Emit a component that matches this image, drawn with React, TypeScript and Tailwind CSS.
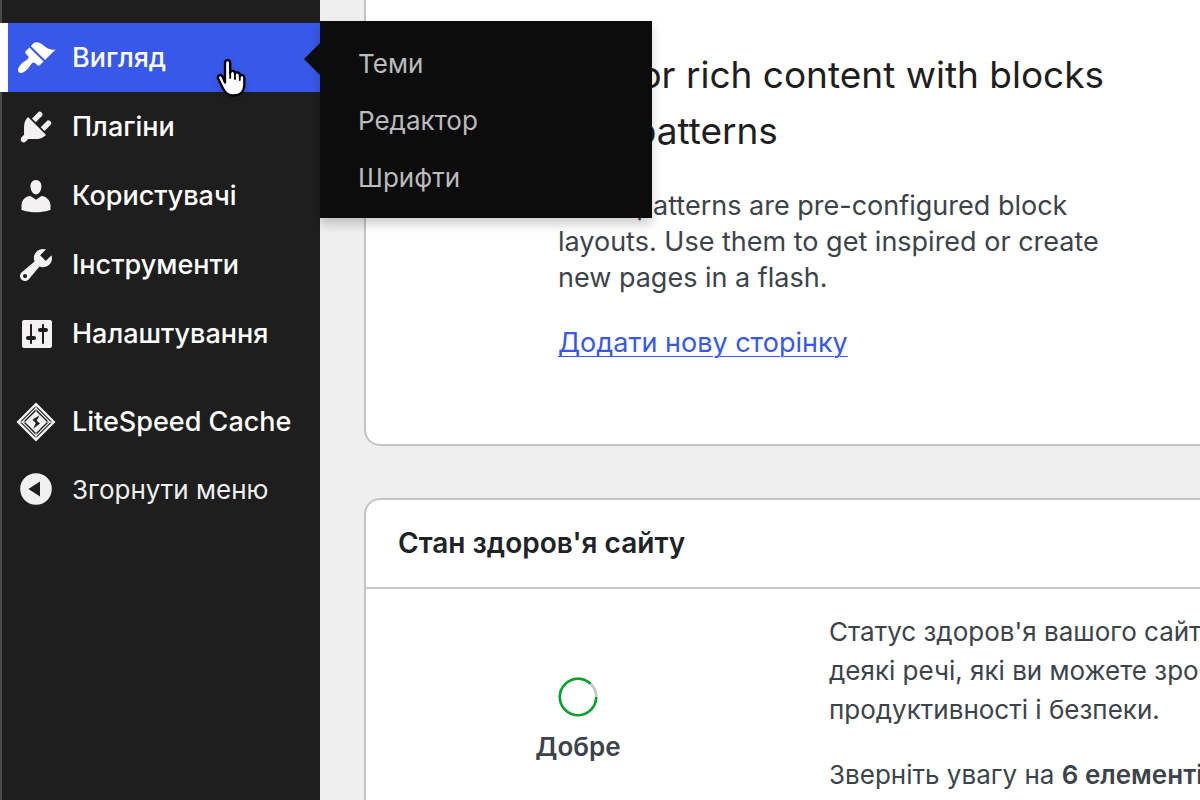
import type { ReactNode } from "react";

type MenuItem = {
  label: string;
  path: string;
};

const items: MenuItem[] = [
  {
    label: "Плагіни",
    path: "M13.11 4.36L9.87 7.6 8 5.73l3.24-3.24c.35-.34 1.05-.2 1.56.32.52.51.66 1.21.31 1.55zm-8 1.77l.91-1.12 9.01 9.01-1.19.84c-.71.71-2.63 1.16-3.82 1.16H6.14L4.9 17.26c-.59.59-1.54.59-2.12 0-.59-.58-.59-1.53 0-2.12l1.24-1.24v-3.88c0-1.13.4-3.19 1.09-3.89zm7.26 3.97l3.24-3.24c.34-.35 1.04-.21 1.55.31.52.51.66 1.21.31 1.55l-3.24 3.25z",
  },
  {
    label: "Користувачі",
    path: "M10 9.25c-2.27 0-2.73-3.44-2.73-3.44C7 4.02 7.82 2 9.97 2c2.16 0 2.98 2.02 2.71 3.81 0 0-.41 3.44-2.68 3.44zm0 2.57L12.72 10c2.39 0 4.52 2.33 4.52 4.53v2.49s-3.65 1.13-7.24 1.13c-3.65 0-7.24-1.13-7.24-1.13v-2.49c0-2.25 1.94-4.48 4.47-4.48z",
  },
  {
    label: "Інструменти",
    path: "M16.68 9.77c-1.34 1.34-3.3 1.67-4.95.99l-5.41 6.52c-.99.99-2.59.99-3.58 0s-.99-2.59 0-3.57l6.52-5.42c-.68-1.65-.35-3.61.99-4.95 1.28-1.28 3.12-1.62 4.72-1.06l-2.89 2.89 2.82 2.82 2.86-2.87c.53 1.58.18 3.39-1.08 4.65zM3.81 16.21c.4.39 1.04.39 1.43 0 .4-.4.4-1.04 0-1.43-.39-.4-1.03-.4-1.43 0-.39.39-.39 1.03 0 1.43z",
  },
  {
    label: "Налаштування",
    path: "M18 16V4c0-.55-.45-1-1-1H4c-.55 0-1 .45-1 1v12c0 .55.45 1 1 1h13c.55 0 1-.45 1-1zM8 11h1c.55 0 1 .45 1 1s-.45 1-1 1H8v1.5c0 .28-.22.5-.5.5s-.5-.22-.5-.5V13H6c-.55 0-1-.45-1-1s.45-1 1-1h1V5.5c0-.28.22-.5.5-.5s.5.22.5.5V11zm5-2h-1c-.55 0-1-.45-1-1s.45-1 1-1h1V5.5c0-.28.22-.5.5-.5s.5.22.5.5V7h1c.55 0 1 .45 1 1s-.45 1-1 1h-1v5.5c0 .28-.22.5-.5.5s-.5-.22-.5-.5V9z",
  },
];

const submenu = ["Теми", "Редактор", "Шрифти"];

function Icon({ children }: { children: ReactNode }) {
  return (
    <svg viewBox="0 0 20 20" className="size-10 shrink-0" fill="currentColor" aria-hidden="true">
      {children}
    </svg>
  );
}

function HandCursor() {
  return (
    <svg
      viewBox="0 0 32 42"
      className="absolute left-[215px] top-[35px] w-8 h-[42px] drop-shadow-md"
      aria-hidden="true"
    >
      <path
        d="M10 24.500V5.200C10 1.200 15.200 1.200 15.200 5.200V15C15.500 12 20 12.300 20 15.500V16C20.500 13.600 24.800 14 24.800 17.200V18.200C25.500 16.300 29.300 16.800 29.300 20V26.500C29.300 33 25.500 37.500 18.500 37.500C13.500 37.500 10.600 35.500 8.300 31L3.200 20.800C1.800 17.600 5.600 15.600 7.500 18.500Z"
        fill="#fff"
        stroke="#000"
        strokeWidth="2.300"
        strokeLinejoin="round"
      />
      <path d="M15.200 14V20M20 15.500V21M24.800 17.500V22" stroke="#000" strokeWidth="1.800" strokeLinecap="round" />
    </svg>
  );
}

function Sidebar() {
  return (
    <nav className="relative z-10 w-80 shrink-0 bg-[#1e1e1e] text-white text-[27px] font-medium leading-[37px]">
      <div className="absolute inset-y-0 left-0 w-[2px] bg-[#4a4a4a]" />
      <ul className="pt-[23px]">
        <li className="relative">
          <a
            href="#appearance"
            className="flex min-h-[69px] items-center gap-4 border-l-8 border-white bg-[#3858e9] pl-2"
          >
            <Icon>
              <path d="M14.480 11.060L7.410 3.990l1.500-1.500c.5-.56 2.300-.47 3.510.32 1.210.8 1.430 1.280 2.910 2.100 1.180.64 2.450 1.260 4.450.85zm-.71.71L6.700 4.700 4.930 6.470c-.39.39-.39 1.020 0 1.410l1.060 1.060c.39.39.39 1.030 0 1.420-.6.6-1.430 1.110-2.210 1.690-.35.26-.7.53-1.010.84C1.430 14.230.4 16.080 1.400 17.070c.99 1 2.840-.03 4.180-1.360.31-.31.58-.66.85-1.020.57-.78 1.080-1.610 1.690-2.210.39-.39 1.020-.39 1.410 0l1.060 1.060c.39.39 1.020.39 1.410 0z" />
            </Icon>
            Вигляд
          </a>
          <div className="absolute left-full -top-[2px] w-[332px] bg-[#0c0c0c] pt-[14px] pb-3 text-[26px] font-normal text-[#bbbbbc] shadow-[0_6px_10px_rgba(0,0,0,0.2)]">
            <div className="absolute right-full top-[22px] border-y-[16px] border-r-[16px] border-y-transparent border-r-[#0c0c0c]" />
            <ul>
              {submenu.map((label) => (
                <li key={label}>
                  <a href="#submenu" className="block px-[38px] py-[10px] leading-[37px]">
                    {label}
                  </a>
                </li>
              ))}
            </ul>
          </div>
          <HandCursor />
        </li>

        {items.map((item) => (
          <li key={item.label}>
            <a href="#menu" className="flex min-h-[69px] items-center gap-4 px-4">
              <span className="text-[#f3f1f1]">
                <Icon>
                  <path d={item.path} />
                </Icon>
              </span>
              {item.label}
            </a>
          </li>
        ))}

        <li className="mt-[19px]">
          <a href="#litespeed" className="flex min-h-[69px] items-center gap-4 px-4">
            <span className="text-[#f3f1f1]">
              <Icon>
                <path
                  d="M10 1.100L18.900 10 10 18.900 1.100 10z"
                  fill="none"
                  stroke="currentColor"
                  strokeWidth="1.200"
                />
                <path
                  d="M10 3.100L16.900 10 10 16.900 3.100 10z"
                  fill="none"
                  stroke="currentColor"
                  strokeWidth=".6"
                />
                <path d="M10 1v3.500M10 15.500V19M1 10h3.500M15.500 10H19" stroke="currentColor" strokeWidth=".5" />
                <path d="M10 4.500L15.500 10 10 15.500 4.500 10z" />
                <path d="M11.800 6.600L8.200 8.900l1.700 1.600-1.300 2.900 3.400-2.600-1.700-1.600z" fill="#1e1e1e" />
              </Icon>
            </span>
            LiteSpeed Cache
          </a>
        </li>
        <li>
          <button
            type="button"
            className="flex min-h-[66px] w-full items-center gap-4 px-4 text-[26px] font-normal text-[#f0f0f0]"
          >
            <Icon>
              <path fillRule="evenodd" d="M10 2.100a7.900 7.900 0 1 0 0 15.800 7.900 7.900 0 0 0 0-15.800zM12 6.200v7.600L6.200 10z" />
            </Icon>
            Згорнути меню
          </button>
        </li>
      </ul>
    </nav>
  );
}

function WelcomePanel() {
  return (
    <section className="rounded-bl-2xl border-2 border-t-0 border-r-0 border-[#c3c4c7] bg-white pl-48 pt-[47px] pb-[83px]">
      <div className="max-w-[560px]">
        <h3 className="text-[37px] leading-[56px] text-[#1e1e1e]">
          Author rich content with blocks and patterns
        </h3>
        <p className="mt-[29px] text-[27px] leading-9 text-[#3c434a]">
          Block patterns are pre-configured block layouts. Use them to get inspired or create new
          pages in a flash.
        </p>
        <a
          href="#new-page"
          className="mt-[29px] inline-block text-[27px] leading-9 text-[#3858e9] underline decoration-1 underline-offset-4"
        >
          Додати нову сторінку
        </a>
      </div>
    </section>
  );
}

function SiteHealth() {
  return (
    <section className="mt-13 grow rounded-tl-2xl border-2 border-r-0 border-b-0 border-[#c3c4c7] bg-white">
      <h2 className="border-b-2 border-[#c3c4c7] px-8 py-6 text-[28px] leading-[39px] font-semibold text-[#1d2327]">
        Стан здоров'я сайту
      </h2>
      <div className="flex gap-[71px] pl-8 text-[26px] leading-[39px] text-[#3c434a]">
        <div className="flex w-[360px] shrink-0 flex-col items-center pt-[88px]">
          <svg viewBox="0 0 40 40" className="size-10" fill="none" strokeWidth="2.500" aria-hidden="true">
            <circle cx="20" cy="20" r="18.200" stroke="#c3c4c7" />
            <circle cx="20" cy="20" r="18.200" stroke="#00a32a" pathLength="100" strokeDasharray="87 13" />
          </svg>
          <p className="mt-[10px] font-semibold">Добре</p>
        </div>
        <div className="grow whitespace-nowrap pt-[23px]">
          <p>
            Статус здоров'я вашого сайту
            <br />
            деякі речі, які ви можете зробити
            <br />
            продуктивності і безпеки.
          </p>
          <p className="mt-[26px]">
            Зверніть увагу на <strong className="font-semibold">6 елементів</strong>
          </p>
        </div>
      </div>
    </section>
  );
}

export default function App() {
  return (
    <div className="flex h-screen overflow-hidden bg-[#efefef] font-[Inter,sans-serif]">
      <Sidebar />
      <main className="flex min-w-0 grow flex-col pl-11">
        <WelcomePanel />
        <SiteHealth />
      </main>
    </div>
  );
}
